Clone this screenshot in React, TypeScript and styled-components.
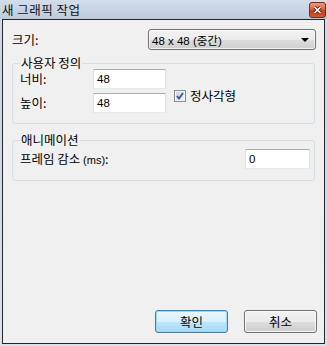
import React from "react";
import styled, { createGlobalStyle } from "styled-components";

const GlobalStyle = createGlobalStyle`
html, body {
    margin: 0;
    padding: 0;
    background: #ffffff;
}
* {
    box-sizing: border-box;
}
`

const KR = `"Noto Sans CJK KR", "Liberation Sans", sans-serif`
const LATIN = `"Liberation Sans", "Noto Sans CJK KR", sans-serif`

const Window = styled.div`
width: 327px;
height: 346px;
display: flex;
flex-direction: column;
padding: 0 2px 2px 2px;
background: linear-gradient(#d6e0ec, #c8d5e5 60px, #d9e2ed);
font-family: ${KR};
font-size: 12.5px;
color: #000;
`

const TitleBar = styled.div`
height: 19px;
display: flex;
align-items: center;
justify-content: space-between;
padding-left: 2px;
margin: 0 -2px;
background: linear-gradient(#d3deea, #bccbdd);
`

const Title = styled.div`
font-family: ${KR};
font-size: 12.5px;
line-height: 14px;
color: #111;
letter-spacing: 0.5px;
`

const CloseButton = styled.span`
flex: none;
width: 17px;
height: 16px;
margin: 1px 1px 0 0;
border-radius: 3px;
border: 1px solid #7a2a18;
background: #cc4a2a linear-gradient(#ec9a7e 0%, #dc6444 45%, #c23c1c 55%, #d4562f 100%);
display: flex;
align-items: center;
justify-content: center;
`

const Frame = styled.div`
flex: 1;
display: flex;
flex-direction: column;
border: 1px solid #262626;
background: #f0f0f0;
padding: 9px 7px 10px 9px;
`

const SizeRow = styled.div`
height: 21px;
display: flex;
align-items: center;
`

const Label = styled.span`
font-family: ${KR};
font-size: 12.5px;
line-height: 14px;
white-space: nowrap;
`

const Small = styled.span`
font-family: ${LATIN};
font-size: 11px;
`

const Combo = styled.div`
width: 168px;
height: 21px;
margin-left: auto;
margin-right: 1px;
border: 1px solid #707070;
border-radius: 3px;
background: linear-gradient(#f2f2f2, #ebebeb 50%, #dddddd 51%, #cfcfcf);
box-shadow: inset 0 0 0 1px rgba(255, 255, 255, 0.7);
display: flex;
align-items: center;
padding: 0 6px 0 3px;
font-family: ${LATIN};
font-size: 11.5px;
`

const Arrow = styled.span`
margin-left: auto;
width: 0;
height: 0;
border-left: 4px solid transparent;
border-right: 4px solid transparent;
border-top: 4px solid #000;
`

const Group = styled.fieldset<{ $top: number }>`
margin: ${p => p.$top}px 2px 0 0;
padding: ${p => (p.$top > 8 ? "3px 4px 11px 7px" : "0 4px 10px 7px")};
border: 1px solid #d5dfe5;
border-radius: 3px;
min-width: 0;
`

const Legend = styled.legend`
padding: 0 1px;
margin-left: 0;
font-family: ${KR};
font-size: 12.5px;
line-height: 12px;
`

const CustomBody = styled.div`
display: flex;
`

const FieldGrid = styled.div`
display: grid;
grid-template-columns: 73px 73px;
grid-auto-rows: 20px;
row-gap: 4px;
align-items: center;
`

const TextBox = styled.div<{ $w: number }>`
width: ${p => p.$w}px;
height: 20px;
background: #fff;
border: 1px solid #e3e9ef;
border-top-color: #abadb3;
border-left-color: #e2e3ea;
border-right-color: #dbdfe6;
display: flex;
align-items: center;
padding-left: 3px;
font-family: ${LATIN};
font-size: 11.5px;
`

const CheckLabel = styled.label`
align-self: flex-start;
margin: 20px 0 0 8px;
display: flex;
align-items: center;
gap: 4px;
`

const CheckBox = styled.span`
width: 12px;
height: 12px;
border: 1px solid #8e8f8f;
background: linear-gradient(135deg, #cfcfcf, #f6f6f6);
box-shadow: inset 0 0 0 1px #f4f4f4;
display: flex;
align-items: center;
justify-content: center;
`

const AnimRow = styled.div`
display: flex;
align-items: center;
justify-content: space-between;
`

const ButtonRow = styled.div`
margin-top: auto;
display: flex;
justify-content: flex-end;
gap: 16px;
`

const Button = styled.div<{ $default?: boolean }>`
width: 73px;
height: 23px;
border: 1px solid ${p => (p.$default ? "#3c7fb1" : "#707070")};
border-radius: 3px;
background: ${p => p.$default
    ? "linear-gradient(#eaf6fd, #d9f0fc 50%, #bee6fd 51%, #a7d9f5)"
    : "linear-gradient(#f2f2f2, #ebebeb 50%, #dddddd 51%, #cfcfcf)"};
box-shadow: inset 0 0 0 1px ${p => (p.$default ? "#9ed6f2" : "rgba(255,255,255,0.8)")};
display: flex;
align-items: center;
justify-content: center;
font-family: ${KR};
font-size: 12.5px;
line-height: 14px;
`

export default function App() {
    return (
        <>
            <GlobalStyle />
            <Window>
                <TitleBar>
                    <Title>새 그래픽 작업</Title>
                    <CloseButton>
                        <svg width="9" height="8" viewBox="0 0 9 8">
                            <path d="M1.5 1 L7.5 7 M7.5 1 L1.5 7" stroke="#5a1a10" strokeWidth="3.2" />
                            <path d="M1.5 1 L7.5 7 M7.5 1 L1.5 7" stroke="#ffffff" strokeWidth="1.6" />
                        </svg>
                    </CloseButton>
                </TitleBar>
                <Frame>
                    <SizeRow>
                        <Label>크기:</Label>
                        <Combo>
                            <span>48 x 48 (중간)</span>
                            <Arrow />
                        </Combo>
                    </SizeRow>
                    <Group $top={7}>
                        <Legend>사용자 정의</Legend>
                        <CustomBody>
                            <FieldGrid>
                                <Label>너비:</Label>
                                <TextBox $w={73}>48</TextBox>
                                <Label>높이:</Label>
                                <TextBox $w={73}>48</TextBox>
                            </FieldGrid>
                            <CheckLabel>
                                <CheckBox>
                                    <svg width="8" height="8" viewBox="0 0 8 8">
                                        <path d="M1 4 L3 6.5 L7 1" fill="none" stroke="#2b58b8" strokeWidth="1.8" />
                                    </svg>
                                </CheckBox>
                                <Label>정사각형</Label>
                            </CheckLabel>
                        </CustomBody>
                    </Group>
                    <Group $top={10}>
                        <Legend>애니메이션</Legend>
                        <AnimRow>
                            <Label>프레임 감소 <Small>(ms)</Small>:</Label>
                            <TextBox $w={65}>0</TextBox>
                        </AnimRow>
                    </Group>
                    <ButtonRow>
                        <Button $default>확인</Button>
                        <Button>취소</Button>
                    </ButtonRow>
                </Frame>
            </Window>
        </>
    )
}
